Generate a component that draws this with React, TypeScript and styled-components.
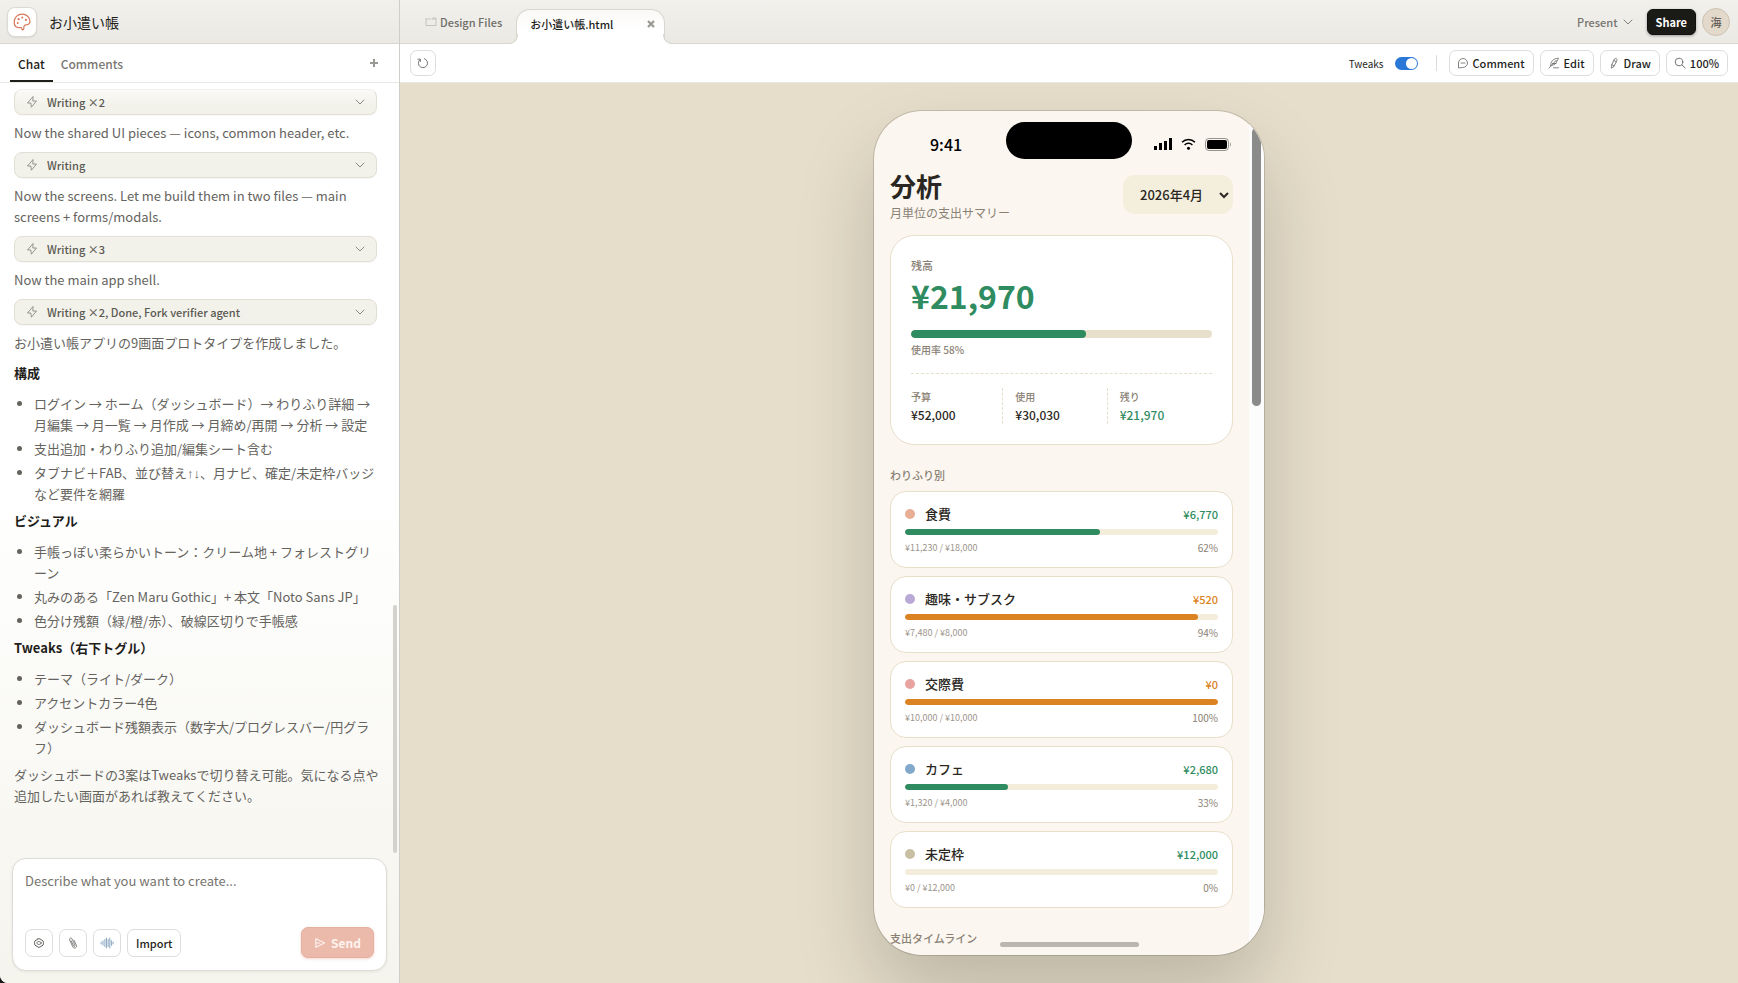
import React from "react";
import styled, { createGlobalStyle, css } from "styled-components";

const UI = `"Noto Sans CJK JP", "Noto Sans", sans-serif`;

const GlobalStyle = createGlobalStyle`
  * { box-sizing: border-box; }
  body { margin: 0; background: #1b1a18; font-family: ${UI}; color: #1f1e1b; }
  button, input, select, textarea { font-family: inherit; }
  p, h1, h2, h3, ul { margin: 0; padding: 0; }
`;

const Shell = styled.div`
  display: flex;
  height: 100vh;
  border-bottom-left-radius: 8px;
  overflow: hidden;
  background: #fff;
`;

/* ---------- sidebar ---------- */

const Sidebar = styled.aside`
  flex: 0 0 400px;
  display: flex;
  flex-direction: column;
  min-height: 0;
  border-right: 1px solid #cfcec9;
  background: linear-gradient(#fff 0%, #fff 50%, #f5f4ed 100%);
`;

const TopBar = styled.header`
  flex: 0 0 44px;
  display: flex;
  align-items: center;
  border-bottom: 1px solid #d8d7ce;
  background: linear-gradient(#f1f0ec, #eae9e4);
`;

const LogoButton = styled.button`
  width: 30px;
  height: 30px;
  margin: 0 12px 0 7px;
  padding: 0;
  display: grid;
  place-items: center;
  border: 1px solid #dcdad2;
  border-radius: 8px;
  background: #fff;
  color: #d9775a;
  box-shadow: 0 1px 2px rgba(0, 0, 0, 0.08);
`;

const ProjectName = styled.h1`
  font-size: 14px;
  line-height: 20px;
  font-weight: 400;
`;

const TabRow = styled.nav`
  flex: 0 0 39px;
  display: flex;
  align-items: stretch;
  padding: 0 19px 0 10px;
  border-bottom: 1px solid #e9e8e4;
`;

const SideTab = styled.button<{ $active?: boolean }>`
  padding: 2px 8px 0;
  border: 0;
  border-bottom: 2px solid ${(p) => (p.$active ? "#1f1e1b" : "transparent")};
  background: none;
  font-size: 12px;
  font-weight: 500;
  color: ${(p) => (p.$active ? "#1f1e1b" : "#7a7872")};
`;

const AddButton = styled.button`
  margin-left: auto;
  padding: 0;
  border: 0;
  background: none;
  color: #9b9993;
  display: grid;
  place-items: center;
`;

const Feed = styled.div`
  flex: 1;
  min-height: 0;
  display: flex;
  gap: 16px;
  padding: 6px 2px 0 14px;
  overflow: hidden;
`;

const Messages = styled.div`
  flex: 1;
  min-width: 0;
`;

const FeedScroll = styled.div`
  align-self: flex-end;
  width: 4px;
  height: 248px;
  margin-bottom: 5px;
  border-radius: 2px;
  background: #d3d2cc;
`;

const ToolChip = styled.button<{ $faded?: boolean }>`
  width: 100%;
  height: 26px;
  display: flex;
  align-items: center;
  padding: 0 10px 0 11px;
  border: 1px solid #e1dfd5;
  border-top-color: ${(p) => (p.$faded ? "#f2f1ec" : "#e1dfd5")};
  border-radius: 8px;
  background: ${(p) => (p.$faded ? "linear-gradient(#fbfaf7, #f3f2ea 60%)" : "#f3f2ea")};
  box-shadow: 0 1px 1px rgba(0, 0, 0, 0.03);
  font-size: 11px;
  font-weight: 500;
  color: #5b5953;
  svg { color: #7f7d76; }
  svg:last-child { margin-left: auto; }
`;

const ChipLabel = styled.span`
  margin-left: 9px;
`;

const Para = styled.p`
  margin-right: -6px;
  padding: 7px 0 9px;
  font-size: 13px;
  line-height: 21px;
  color: #65635d;
`;

const Heading = styled.h2`
  margin: 0 0 10px;
  font-size: 13px;
  line-height: 21px;
  font-weight: 700;
  color: #1f1e1b;
`;

const Bullets = styled.ul`
  display: flex;
  flex-direction: column;
  gap: 3px;
  margin: 0 -6px 6px 0;
  padding-left: 20px;
  font-size: 13px;
  line-height: 21px;
  color: #65635d;
`;

const Arrows = styled.span`
  font-family: "Liberation Sans", sans-serif;
  line-height: 1;
`;

const Closing = styled(Para)`
  padding-top: 0;
`;

const Composer = styled.form`
  margin: 0 12px 12px;
  padding: 12px;
  display: flex;
  flex-direction: column;
  border: 1px solid #dddcd6;
  border-radius: 14px;
  background: #fff;
  box-shadow: 0 1px 3px rgba(0, 0, 0, 0.07);
`;

const Prompt = styled.textarea`
  height: 56px;
  padding: 0;
  border: 0;
  outline: 0;
  resize: none;
  background: none;
  font-size: 13px;
  line-height: 20px;
  &::placeholder { color: #76746e; opacity: 1; }
`;

const ComposerRow = styled.div`
  display: flex;
  align-items: center;
  gap: 6px;
`;

const outlined = css`
  display: inline-flex;
  align-items: center;
  justify-content: center;
  border: 1px solid #dedddb;
  border-radius: 7px;
  background: #fff;
  color: #1f1e1b;
  font-size: 11px;
  font-weight: 500;
  svg { color: #66645f; }
`;

const ToolButton = styled.button<{ $square?: boolean }>`
  ${outlined}
  height: 28px;
  width: ${(p) => (p.$square ? "28px" : "auto")};
  padding: ${(p) => (p.$square ? "0" : "0 8px")};
`;

const SendButton = styled.button`
  margin-left: auto;
  height: 31px;
  padding: 0 12px;
  display: inline-flex;
  align-items: center;
  gap: 5px;
  border: 1px solid #e3b0a1;
  border-radius: 7px;
  background: #ecbaab;
  color: #fdf3ef;
  font-size: 12px;
  font-weight: 700;
  box-shadow: 0 1px 3px rgba(217, 119, 90, 0.3);
`;

/* ---------- workspace ---------- */

const Workspace = styled.main`
  flex: 1;
  min-width: 0;
  display: flex;
  flex-direction: column;
`;

const WorkBar = styled(TopBar)`
  padding: 0 8px 0 25px;
`;

const FilesTab = styled.button`
  display: flex;
  align-items: center;
  gap: 3px;
  padding: 0;
  border: 0;
  background: none;
  font-size: 11px;
  font-weight: 500;
  color: #6f6d67;
  svg { color: #c6c4bc; }
`;

const FileTab = styled.div`
  position: relative;
  align-self: flex-end;
  width: 149px;
  height: 35px;
  margin: 0 0 -1px 14px;
  padding: 0 7px 6px 13px;
  display: flex;
  align-items: center;
  justify-content: space-between;
  border: 1px solid #d8d7ce;
  border-bottom: 0;
  border-radius: 14px 14px 0 0;
  background: linear-gradient(#faf9f6, #fff 60%);
  font-size: 11px;
  font-weight: 500;
  &::before, &::after {
    content: "";
    position: absolute;
    bottom: 0;
    width: 9px;
    height: 9px;
    border-bottom: 1px solid #d8d7ce;
  }
  &::before {
    left: -9px;
    border-right: 1px solid #d8d7ce;
    border-bottom-right-radius: 9px;
    box-shadow: 3px 3px 0 #fff;
    clip-path: inset(0 -1px 0 0);
  }
  &::after {
    right: -9px;
    border-left: 1px solid #d8d7ce;
    border-bottom-left-radius: 9px;
    box-shadow: -3px 3px 0 #fff;
    clip-path: inset(0 0 0 -1px);
  }
`;

const CloseButton = styled.button`
  padding: 0;
  border: 0;
  background: none;
  display: grid;
  color: #9a9892;
`;

const PresentButton = styled.button`
  margin-left: auto;
  display: flex;
  align-items: center;
  gap: 4px;
  padding: 0;
  border: 0;
  background: none;
  font-size: 11px;
  font-weight: 500;
  color: #76746e;
`;

const ShareButton = styled.button`
  height: 26px;
  margin: 0 6px 0 13px;
  padding: 0 8px;
  border: 1px solid #111;
  border-radius: 6px;
  background: #1a1a17;
  color: #fff;
  font-size: 11px;
  font-weight: 700;
  box-shadow: 0 1px 3px rgba(0, 0, 0, 0.35);
`;

const Avatar = styled.div`
  width: 28px;
  height: 28px;
  display: grid;
  place-items: center;
  border: 1px solid #cdc3b3;
  border-radius: 50%;
  background: #e3d9ca;
  color: #65605a;
  font-size: 11px;
  font-weight: 500;
`;

const Toolbar = styled.div`
  flex: 0 0 39px;
  display: flex;
  align-items: center;
  gap: 6px;
  padding: 0 10px;
  border-bottom: 1px solid #e9e8e4;
`;

const BarButton = styled.button<{ $square?: boolean }>`
  ${outlined}
  height: 26px;
  gap: 4px;
  width: ${(p) => (p.$square ? "26px" : "auto")};
  padding: ${(p) => (p.$square ? "0" : "0 8px 0 7px")};
`;

const TweakLabel = styled.label`
  margin-left: auto;
  display: flex;
  align-items: center;
  gap: 11px;
  font-size: 10px;
`;

const Toggle = styled.input`
  appearance: none;
  width: 23px;
  height: 13px;
  margin: 0;
  padding: 1px;
  display: flex;
  justify-content: flex-end;
  border-radius: 7px;
  background: #2977d6;
  &::before {
    content: "";
    width: 11px;
    height: 11px;
    border-radius: 50%;
    background: #fff;
  }
`;

const Divider = styled.span`
  width: 1px;
  height: 16px;
  margin: 0 6px 0 12px;
  background: #dcdbd7;
`;

const Canvas = styled.section`
  flex: 1;
  min-height: 0;
  display: flex;
  align-items: center;
  justify-content: center;
  overflow: hidden;
  background: #e6deca;
`;

/* ---------- phone ---------- */

const Phone = styled.article`
  position: relative;
  width: 390px;
  height: 844px;
  display: flex;
  border-radius: 48px;
  overflow: hidden;
  background: #fbf6ef;
  box-shadow: 0 0 0 1px rgba(0, 0, 0, 0.14), 0 40px 80px rgba(0, 0, 0, 0.18);
  color: #2a2722;
`;

const Screen = styled.div`
  flex: 1;
  min-width: 0;
  padding: 14px 16px 0;
`;

const PhoneScroll = styled.div`
  width: 15px;
  padding: 17px 3px 0;
  background: #fcfcfc;
`;

const PhoneThumb = styled.div`
  height: 278px;
  border-radius: 5px;
  background: #8b8b8b;
`;

const StatusBar = styled.div`
  height: 38px;
  display: flex;
  align-items: center;
  justify-content: space-between;
  padding: 0 2px 0 40px;
  font-size: 16px;
  font-weight: 500;
  color: #000;
`;

const Island = styled.div`
  position: absolute;
  top: 11px;
  left: 50%;
  width: 126px;
  height: 37px;
  margin-left: -63px;
  border-radius: 19px;
  background: #000;
`;

const HomeBar = styled.div`
  position: absolute;
  bottom: 8px;
  left: 50%;
  width: 139px;
  height: 5px;
  margin-left: -69px;
  border-radius: 3px;
  background: #bbb6af;
`;

const StatusIcons = styled.div`
  display: flex;
  align-items: center;
  gap: 9px;
`;

const ScreenHead = styled.div`
  display: flex;
  justify-content: space-between;
  align-items: flex-start;
  margin: 6px 0 12px;
`;

const ScreenTitle = styled.h2`
  font-size: 26px;
  line-height: 34px;
  font-weight: 700;
`;

const ScreenSub = styled.p`
  font-size: 12px;
  line-height: 20px;
  color: #8a8175;
`;

const MonthSelect = styled.div`
  display: grid;
  align-items: center;
  width: 110px;
  margin-top: 6px;
  border-radius: 12px;
  background: #f4eedd;
  select {
    grid-area: 1 / 1;
    appearance: none;
    height: 39px;
    padding: 0 0 0 17px;
    border: 0;
    background: none;
    color: #2a2722;
    font-size: 13px;
    font-weight: 500;
  }
  svg {
    grid-area: 1 / 1;
    justify-self: end;
    margin-right: 3px;
    pointer-events: none;
  }
`;

const Summary = styled.section`
  padding: 20px;
  border: 1px solid #e8dfc9;
  border-radius: 24px;
  background: #fff;
`;

const Caption = styled.p<{ $size?: number }>`
  font-size: ${(p) => p.$size ?? 11}px;
  line-height: 18px;
  font-weight: 500;
  color: #8a8175;
`;

const Balance = styled.p`
  margin-bottom: 14px;
  font-size: 32px;
  line-height: 42px;
  font-weight: 700;
  color: #2f8c60;
`;

const Usage = styled(Caption)`
  margin: 3px 0 14px;
`;

const Track = styled.div<{ $tall?: boolean }>`
  height: ${(p) => (p.$tall ? 8 : 6)}px;
  border-radius: 4px;
  background: ${(p) => (p.$tall ? "#e9e0cc" : "#f4eddc")};
  overflow: hidden;
`;

const Fill = styled.div<{ $warn?: boolean }>`
  height: 100%;
  border-radius: 4px;
  background: ${(p) => (p.$warn ? "#db8323" : "#2f8c60")};
`;

const Figures = styled.div`
  display: grid;
  grid-template-columns: repeat(3, 1fr);
  gap: 12px;
  padding-top: 14px;
  border-top: 1px dashed #e5decb;
`;

const Figure = styled.div`
  border-right: 1px dashed #e5decb;
  &:last-child { border-right: 0; }
`;

const Amount = styled.p<{ $tone?: "good" | "warn"; $small?: boolean }>`
  font-size: ${(p) => (p.$small ? 11 : 12)}px;
  line-height: 18px;
  font-weight: 500;
  color: ${(p) => (p.$tone === "good" ? "#2f8c60" : p.$tone === "warn" ? "#db8323" : "#2a2722")};
`;

const SectionTitle = styled.h3`
  margin: 22px 0 8px;
  font-size: 11px;
  line-height: 16px;
  font-weight: 500;
  color: #8a8175;
`;

const Categories = styled.div`
  display: flex;
  flex-direction: column;
  gap: 8px;
`;

const Category = styled.div`
  height: 77px;
  padding: 13px 14px;
  border: 1px solid #e8dfc9;
  border-radius: 16px;
  background: #fff;
`;

const Line = styled.div<{ $head?: boolean }>`
  display: flex;
  align-items: center;
  justify-content: space-between;
  margin-bottom: ${(p) => (p.$head ? 6 : 0)}px;
`;

const Name = styled.h4`
  margin: 0 auto 0 10px;
  font-size: 13px;
  line-height: 18px;
  font-weight: 500;
`;

const Dot = styled.span<{ $color: string }>`
  width: 10px;
  height: 10px;
  border-radius: 50%;
  background: ${(p) => p.$color};
`;

const Spent = styled.span`
  font-size: 9px;
  line-height: 26px;
  color: #9c958b;
`;

const Percent = styled.span`
  font-size: 10px;
  line-height: 26px;
  color: #8a8175;
`;

/* ---------- icons ---------- */

type IconProps = { size?: number; w?: number; children: React.ReactNode };
const Icon = ({ size = 12, w = 1, children }: IconProps) => (
  <svg width={size} height={size} viewBox="0 0 12 12" fill="none" stroke="currentColor" strokeWidth={w} strokeLinecap="round" strokeLinejoin="round" aria-hidden="true">
    {children}
  </svg>
);

const Palette = () => (
  <svg width="18" height="18" viewBox="0 0 18 18" fill="none" stroke="currentColor" strokeWidth="1.2" strokeLinejoin="round" aria-hidden="true">
    <path d="M9.200 1.200C4.600 1.200 1.200 4.600 1.200 8.900c0 3.300 2 5.600 4.700 5.700 1.300 0 2.200-.4 2.600.3.500.8.200 2 1.300 2 1.300 0 1-2.500 1.200-3.700.2-1 1.100-1.300 2.300-1.400 2.300-.1 3.600-1.200 3.600-3.300 0-4.200-3.300-7.300-7.700-7.300z" />
    <g fill="currentColor" stroke="none">
      <circle cx="4.700" cy="9.900" r="1" /><circle cx="5.600" cy="6.200" r="1.100" /><circle cx="9.300" cy="4.500" r="1" /><circle cx="12.900" cy="6.900" r="1.100" />
    </g>
  </svg>
);
const Bolt = () => <Icon w={0.8}><path d="M6.800.8L1.500 7h3.300l.6 4.200L10.500 5H7.200z" /></Icon>;
const Chevron = () => <Icon w={0.9}><path d="M2 4l4 4 4-4" /></Icon>;
const Plus = () => <Icon w={2}><path d="M6 2v8M2 6h8" strokeLinecap="butt" /></Icon>;
const Cross = () => <Icon w={2.2}><path d="M3 3l6 6M9 3l-6 6" strokeLinecap="butt" /></Icon>;
const Gear = () => (
  <Icon w={1}>
    <path d="M4.800 1.800h2.400l.5.9 1.300.4 1.200.9v1.300l.8.700-.8.8v1.200l-1.200.9-1.300.4-.5.9H4.800l-.5-.9L3 8.900 1.800 8V6.800L1 6l.8-.7V4L3 3.100l1.300-.4z" />
    <ellipse cx="6" cy="6" rx="2.200" ry="1.500" strokeWidth=".8" />
  </Icon>
);
const Clip = () => <Icon w={0.8}><path d="M4.200 3.800l2.300 5c.5 1 1.900.5 1.500-.6L5 1.800C4.300.3 1.900 1.200 2.600 2.900l3.200 7c1.100 2.200 4.500.8 3.600-1.600L7 3.200" /></Icon>;
const Wave = () => <Icon size={14} w={0.7}><path d="M1 5.200v1.600M2.600 4.200v3.600M4.200 3v6M5.600 1.800v8.400M7 3v6M8.400 1.800v8.400M9.800 4v4M11.200 5.200v1.600" stroke="#6f93b3" /></Icon>;
const SendIcon = () => <Icon w={1.100}><path d="M1.800 1.800L10.500 6l-8.700 4.200zM1.800 6h4" /></Icon>;
const Folder = () => <Icon><path d="M1 3v6.500h10V3H7.500M1 3h4.500M7 3l.8-1H11v1" /></Icon>;
const Reload = () => <Icon w={0.9}><path d="M7.500 1.700A4.600 4.600 0 1 1 2.500 3M1 2.200h2.400v2.300" /></Icon>;
const Bubble = () => <Icon w={0.8}><path d="M1.500 10.500V6A4.500 4.500 0 1 1 6 10.500zM4 6h4" /></Icon>;
const Quill = () => <Icon w={0.8}><path d="M1 11L7 4.500M2.800 9C2 5 5 1.500 10.500 1.200c-.4 1.300-.8 2-1.500 2.800H7.500M8.800 4.500C8.300 6.500 6.500 8.300 3.500 8.300M4.500 6.500h3.500M5.500 10.800h5" /></Icon>;
const Pencil = () => <Icon w={0.8}><path d="M3.500 10.800l.2-3L6.500 2c.6-1.200 3-.2 2.500 1.200L6.200 9zM5.800 3.500l2.500 1.200M4 7.800l2 1" /></Icon>;
const Lens = () => <Icon w={0.9}><circle cx="5" cy="5" r="3.800" /><path d="M8 8l3.200 3" /></Icon>;

const Signal = () => (
  <svg width="18" height="12" viewBox="0 0 18 12" aria-hidden="true">
    <path d="M0 8h3v4H0zM5 5h3v7H5zM10 3h3v9h-3zM15 0h3v12h-3z" />
  </svg>
);
const Wifi = () => (
  <svg width="15" height="12" viewBox="0 0 15 12" fill="none" stroke="#000" strokeWidth="1.500" aria-hidden="true">
    <path d="M1 4.300C4.600.6 10.400.6 14 4.300M3.600 7c2.200-2.200 5.600-2.200 7.800 0" />
    <circle cx="7.500" cy="10.200" r="1.500" fill="#000" stroke="none" />
  </svg>
);
const Battery = () => (
  <svg width="26" height="13" viewBox="0 0 26 13" aria-hidden="true">
    <rect x=".5" y=".5" width="23" height="12" rx="3.500" fill="none" stroke="#000" strokeOpacity=".4" />
    <rect x="2" y="2" width="20" height="9" rx="2" />
    <path d="M25 4.500c1.200.5 1.200 3.500 0 4z" fillOpacity=".4" />
  </svg>
);

const categories = [
  { name: "食費", color: "#e8ae96", left: "¥6,770", spent: "¥11,230 / ¥18,000", percent: 62.4, label: "62%" },
  { name: "趣味・サブスク", color: "#b8a9d6", left: "¥520", spent: "¥7,480 / ¥8,000", percent: 93.5, label: "94%", warn: true },
  { name: "交際費", color: "#e8a3a0", left: "¥0", spent: "¥10,000 / ¥10,000", percent: 100, label: "100%", warn: true },
  { name: "カフェ", color: "#82a8cb", left: "¥2,680", spent: "¥1,320 / ¥4,000", percent: 33, label: "33%" },
  { name: "未定枠", color: "#c9bfa3", left: "¥12,000", spent: "¥0 / ¥12,000", percent: 0, label: "0%" },
];

const Chip = ({ text, faded }: { text: string; faded?: boolean }) => (
  <ToolChip type="button" $faded={faded}>
    <Bolt />
    <ChipLabel>{text}</ChipLabel>
    <Chevron />
  </ToolChip>
);

const List = ({ items }: { items: React.ReactNode[] }) => (
  <Bullets>{items.map((t, i) => <li key={i}>{t}</li>)}</Bullets>
);

export default function App() {
  return (
    <>
      <GlobalStyle />
      <Shell>
        <Sidebar>
          <TopBar>
            <LogoButton type="button" aria-label="Home"><Palette /></LogoButton>
            <ProjectName>お小遣い帳</ProjectName>
          </TopBar>
          <TabRow>
            <SideTab type="button" $active>Chat</SideTab>
            <SideTab type="button">Comments</SideTab>
            <AddButton type="button" aria-label="New chat"><Plus /></AddButton>
          </TabRow>
          <Feed>
            <Messages>
              <Chip text="Writing ×2" faded />
              <Para>Now the shared UI pieces — icons, common header, etc.</Para>
              <Chip text="Writing" />
              <Para>Now the screens. Let me build them in two files — main screens + forms/modals.</Para>
              <Chip text="Writing ×3" />
              <Para>Now the main app shell.</Para>
              <Chip text="Writing ×2, Done, Fork verifier agent" />
              <Para>お小遣い帳アプリの9画面プロトタイプを作成しました。</Para>
              <Heading>構成</Heading>
              <List items={[
                "ログイン → ホーム（ダッシュボード）→ わりふり詳細 → 月編集 → 月一覧 → 月作成 → 月締め/再開 → 分析 → 設定",
                "支出追加・わりふり追加/編集シート含む",
                <>タブナビ＋FAB、並び替え<Arrows>↑↓</Arrows>、月ナビ、確定/未定枠バッジなど要件を網羅</>,
              ]} />
              <Heading>ビジュアル</Heading>
              <List items={[
                "手帳っぽい柔らかいトーン：クリーム地 + フォレストグリーン",
                "丸みのある「Zen Maru Gothic」+ 本文「Noto Sans JP」",
                "色分け残額（緑/橙/赤）、破線区切りで手帳感",
              ]} />
              <Heading>Tweaks（右下トグル）</Heading>
              <List items={[
                "テーマ（ライト/ダーク）",
                "アクセントカラー4色",
                "ダッシュボード残額表示（数字大/プログレスバー/円グラフ）",
              ]} />
              <Closing>ダッシュボードの3案はTweaksで切り替え可能。気になる点や追加したい画面があれば教えてください。</Closing>
            </Messages>
            <FeedScroll />
          </Feed>
          <Composer>
            <Prompt aria-label="Prompt" placeholder="Describe what you want to create..." />
            <ComposerRow>
              <ToolButton type="button" $square aria-label="Settings"><Gear /></ToolButton>
              <ToolButton type="button" $square aria-label="Attach"><Clip /></ToolButton>
              <ToolButton type="button" $square aria-label="Voice"><Wave /></ToolButton>
              <ToolButton type="button">Import</ToolButton>
              <SendButton type="button"><SendIcon />Send</SendButton>
            </ComposerRow>
          </Composer>
        </Sidebar>

        <Workspace>
          <WorkBar>
            <FilesTab type="button"><Folder />Design Files</FilesTab>
            <FileTab>
              お小遣い帳.html
              <CloseButton type="button" aria-label="Close tab"><Cross /></CloseButton>
            </FileTab>
            <PresentButton type="button">Present<Chevron /></PresentButton>
            <ShareButton type="button">Share</ShareButton>
            <Avatar>海</Avatar>
          </WorkBar>
          <Toolbar>
            <BarButton type="button" $square aria-label="Reload"><Reload /></BarButton>
            <TweakLabel>
              Tweaks
              <Toggle type="checkbox" defaultChecked />
            </TweakLabel>
            <Divider />
            <BarButton type="button"><Bubble />Comment</BarButton>
            <BarButton type="button"><Quill />Edit</BarButton>
            <BarButton type="button"><Pencil />Draw</BarButton>
            <BarButton type="button"><Lens />100%</BarButton>
          </Toolbar>
          <Canvas>
            <Phone>
              <Screen>
                <StatusBar>
                  <span>9:41</span>
                  <StatusIcons><Signal /><Wifi /><Battery /></StatusIcons>
                </StatusBar>
                <ScreenHead>
                  <div>
                    <ScreenTitle>分析</ScreenTitle>
                    <ScreenSub>月単位の支出サマリー</ScreenSub>
                  </div>
                  <MonthSelect>
                    <select aria-label="月"><option>2026年4月</option></select>
                    <Icon size={12} w={2}><path d="M2 4l4 4 4-4" strokeLinecap="butt" strokeLinejoin="miter" /></Icon>
                  </MonthSelect>
                </ScreenHead>
                <Summary>
                  <Caption>残高</Caption>
                  <Balance>¥21,970</Balance>
                  <Track $tall><Fill style={{ width: "58%" }} /></Track>
                  <Usage $size={10}>使用率 58%</Usage>
                  <Figures>
                    <Figure><Caption $size={10}>予算</Caption><Amount>¥52,000</Amount></Figure>
                    <Figure><Caption $size={10}>使用</Caption><Amount>¥30,030</Amount></Figure>
                    <Figure><Caption $size={10}>残り</Caption><Amount $tone="good">¥21,970</Amount></Figure>
                  </Figures>
                </Summary>
                <SectionTitle>わりふり別</SectionTitle>
                <Categories>
                  {categories.map((c) => (
                    <Category key={c.name}>
                      <Line $head>
                        <Dot $color={c.color} />
                        <Name>{c.name}</Name>
                        <Amount $small $tone={c.warn ? "warn" : "good"}>{c.left}</Amount>
                      </Line>
                      <Track><Fill $warn={c.warn} style={{ width: `${c.percent}%` }} /></Track>
                      <Line>
                        <Spent>{c.spent}</Spent>
                        <Percent>{c.label}</Percent>
                      </Line>
                    </Category>
                  ))}
                </Categories>
                <SectionTitle>支出タイムライン</SectionTitle>
              </Screen>
              <PhoneScroll><PhoneThumb /></PhoneScroll>
              <Island />
              <HomeBar />
            </Phone>
          </Canvas>
        </Workspace>
      </Shell>
    </>
  );
}
